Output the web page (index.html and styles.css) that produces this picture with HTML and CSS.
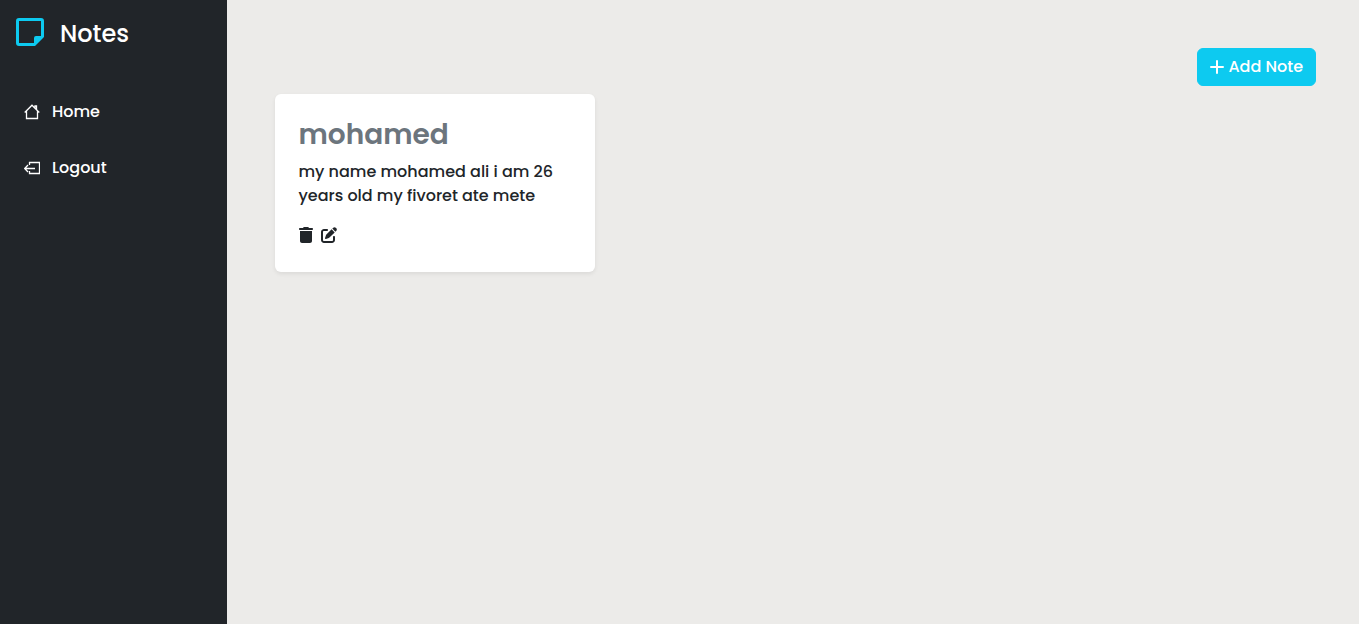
FILE: index.html
```html
<!DOCTYPE html>
<html lang="en">
<head>
<meta charset="utf-8">
<meta name="viewport" content="width=device-width, initial-scale=1">
<title>Notes</title>
<link rel="stylesheet" href="styles.css">
</head>
<body>
<div class="layout">
  <aside class="sidebar">
    <div class="brand">
      <svg class="brand-icon" viewBox="0 0 28 28" aria-hidden="true"><path fill="currentColor" fill-rule="evenodd" d="M3 0H25Q28 0 28 3V19L19 28H3Q0 28 0 25V3Q0 0 3 0ZM3 3V25H18V20Q18 18 20 18H25V3Z"/></svg>
      <span>Notes</span>
    </div>
    <nav class="menu">
      <a class="menu-link" href="#home">
        <svg class="menu-icon" viewBox="0 0 16 16" aria-hidden="true"><path d="M.7 8.5 8 1.2l7.3 7.3M2.5 7v7.500h11V7M12.500 5.500V2H11v2"/></svg>
        <span>Home</span>
      </a>
      <a class="menu-link" href="#logout">
        <svg class="menu-icon" viewBox="0 0 16 16" aria-hidden="true"><path d="M5.500 5V2.500h10v11h-10V11M11 8.500H1M4 5 .7 8.500 4 12"/></svg>
        <span>Logout</span>
      </a>
    </nav>
  </aside>
  <main class="content">
    <div class="toolbar">
      <button class="add-button" type="button">
        <svg class="add-icon" viewBox="0 0 14 14" aria-hidden="true"><path d="M7 1v12M1 7h12"/></svg>
        <span>Add Note</span>
      </button>
    </div>
    <section class="notes">
      <article class="note">
        <h2 class="note-title">mohamed</h2>
        <p class="note-text">my name mohamed ali i am 26 years old my fivoret ate mete</p>
        <div class="note-actions">
          <button class="icon-button" type="button" aria-label="Delete note">
            <svg class="trash-icon" viewBox="0 0 448 512" aria-hidden="true"><path fill="currentColor" d="M135.200 17.700C140.600 6.800 151.700 0 163.800 0H284.200c12.100 0 23.200 6.800 28.600 17.700L320 32h96c17.700 0 32 14.300 32 32s-14.300 32-32 32H32C14.300 96 0 81.700 0 64S14.300 32 32 32h96zM32 128H416V448c0 35.300-28.700 64-64 64H96c-35.300 0-64-28.700-64-64z"/></svg>
          </button>
          <button class="icon-button" type="button" aria-label="Edit note">
            <svg class="edit-icon" viewBox="0 0 512 512" aria-hidden="true"><path fill="currentColor" d="M471.600 21.700c-21.900-21.900-57.300-21.900-79.200 0L362.300 51.700l97.900 97.900 30.100-30.100c21.900-21.900 21.900-57.300 0-79.200zM172.400 241.700c-6.100 6.100-10.800 13.600-13.500 21.900l-29.600 88.800c-2.900 8.600-.6 18.100 5.800 24.600s15.900 8.700 24.600 5.800l88.800-29.600c8.200-2.700 15.700-7.400 21.900-13.500L437.700 172.300 339.700 74.300zM96 64C43 64 0 107 0 160V416c0 53 43 96 96 96H352c53 0 96-43 96-96V320c0-17.700-14.300-32-32-32s-32 14.300-32 32v96c0 17.700-14.300 32-32 32H96c-17.700 0-32-14.300-32-32V160c0-17.700 14.300-32 32-32h96c17.700 0 32-14.300 32-32s-14.300-32-32-32z"/></svg>
          </button>
        </div>
      </article>
    </section>
  </main>
</div>
</body>
</html>
```
FILE: styles.css
```css
* {
  box-sizing: border-box;
}

body {
  margin: 0;
  background: #ecebe9;
  color: #212529;
  font: 500 16px/24px Poppins, Inter, sans-serif;
}

.layout {
  display: grid;
  grid-template-columns: 1fr 5fr;
  min-height: 100vh;
}

.sidebar {
  background: #212529;
  color: #fff;
}

.brand {
  display: flex;
  align-items: flex-start;
  gap: 16px;
  padding: 18px 16px;
  font-size: 24px;
  line-height: 32px;
}

.brand-icon {
  width: 28px;
  height: 28px;
  color: #0dcaf0;
}

.menu {
  display: grid;
  gap: 16px;
  margin-top: 24px;
}

.menu-link {
  display: flex;
  align-items: center;
  gap: 12px;
  padding: 8px 24px;
  color: inherit;
  text-decoration: none;
}

.menu-icon {
  width: 16px;
  height: 16px;
  fill: none;
  stroke: currentColor;
  stroke-width: 1.3;
}

.content {
  padding: 48px 43px 48px 48px;
}

.toolbar {
  display: flex;
  justify-content: flex-end;
}

.add-button {
  display: flex;
  align-items: center;
  gap: 4px;
  padding: 6px 12px;
  border: 1px solid #0dcaf0;
  border-radius: 6px;
  background: #0dcaf0;
  color: #fff;
  font: inherit;
}

.add-icon {
  width: 14px;
  height: 14px;
  fill: none;
  stroke: currentColor;
  stroke-width: 2;
  stroke-linecap: round;
}

.notes {
  display: grid;
  grid-template-columns: repeat(auto-fill, 320px);
  gap: 24px;
  margin-top: 8px;
}

.note {
  padding: 24px;
  border-radius: 6px;
  background: #fff;
  box-shadow: 0 2px 4px rgba(0, 0, 0, 0.075);
}

.note-title {
  margin: 0 0 8px;
  color: #6c757d;
  font-size: 28px;
  font-weight: 600;
  line-height: 34px;
}

.note-text {
  margin: 0 0 16px;
}

.note-actions {
  display: flex;
  align-items: flex-start;
  gap: 8px;
  height: 24px;
  padding-top: 3px;
}

.icon-button {
  display: flex;
  padding: 0;
  border: 0;
  background: none;
  color: inherit;
}

.trash-icon {
  width: 14px;
  height: 16px;
}

.edit-icon {
  width: 16px;
  height: 16px;
}
```
